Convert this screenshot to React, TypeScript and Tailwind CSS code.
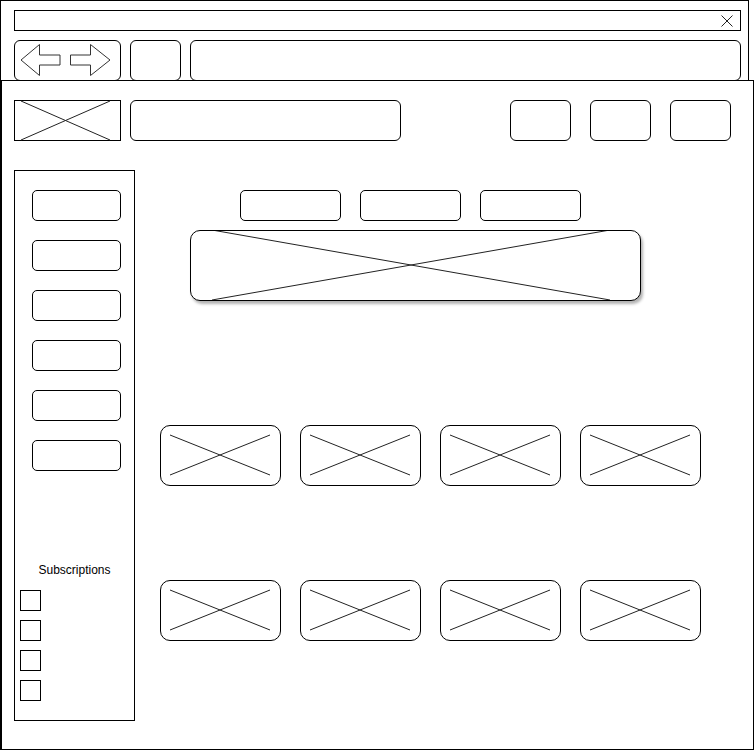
import React from "react";

function XLines({ w, h, x1, y1, x2, y2 }: { w: number; h: number; x1: number; y1: number; x2: number; y2: number }) {
  return (
    <svg width={w} height={h} className="block overflow-visible">
      <line x1={x1} y1={y1} x2={x2} y2={y2} stroke="#222" strokeWidth={1} />
      <line x1={x1} y1={y2} x2={x2} y2={y1} stroke="#222" strokeWidth={1} />
    </svg>
  );
}

function Card() {
  return (
    <div className="w-[121px] h-[61px] border border-black rounded-[10px] overflow-hidden bg-white">
      <XLines w={119} h={59} x1={9} y1={9} x2={109} y2={49} />
    </div>
  );
}

export default function App() {
  const sideButtons = [0, 1, 2, 3, 4, 5];
  const checks = [0, 1, 2, 3];
  const tabs = [0, 1, 2];
  const headerBtns = [0, 1, 2];
  return (
    <div className="w-[755px] h-[751px] bg-white overflow-hidden" style={{ fontFamily: '"Liberation Sans", Arial, sans-serif' }}>
      {/* browser frame */}
      <div className="w-[749px] h-[750px] border border-black flex flex-col">
        <div className="pl-[13px] pt-[9px]">
          {/* title bar */}
          <div className="w-[727px] h-[21px] border border-black flex items-center justify-end pr-[7px]">
            <svg width="12" height="12" className="block">
              <line x1="0.5" y1="0.5" x2="11.5" y2="11.5" stroke="#222" strokeWidth="1" />
              <line x1="0.5" y1="11.5" x2="11.5" y2="0.5" stroke="#222" strokeWidth="1" />
            </svg>
          </div>
          {/* nav row */}
          <div className="flex mt-[9px] gap-[9px]">
            <div className="w-[107px] h-[41px] border border-black rounded-[6px]">
              <svg width="105" height="39" className="block overflow-visible">
                <g transform="translate(-15,-41)">
                  <polygon
                    points="21,60 39.5,44.5 39.5,55 60,55 60,65 39.5,65 39.5,75.5"
                    fill="white"
                    stroke="#333"
                    strokeWidth="1"
                  />
                  <polygon
                    points="110,60 90.5,44.5 90.5,55 70.5,55 70.5,65 90.5,65 90.5,75.5"
                    fill="white"
                    stroke="#333"
                    strokeWidth="1"
                  />
                </g>
              </svg>
            </div>
            <div className="w-[51px] h-[41px] border border-black rounded-[6px]" />
            <div className="w-[551px] h-[41px] border border-black rounded-[6px]" />
          </div>
        </div>
        {/* page frame */}
        <div className="relative z-10 mt-[-1px] w-[753px] h-[670px] shrink-0 border border-black bg-white flex flex-col">
          {/* header */}
          <div className="flex items-start mt-[19px] pl-[12px]">
            <div className="w-[107px] h-[41px] border border-black">
              <XLines w={105} h={39} x1={6} y1={0} x2={95} y2={39} />
            </div>
            <div className="ml-[9px] w-[271px] h-[41px] border border-black rounded-[6px]" />
            <div className="ml-[109px] flex gap-[19px]">
              {headerBtns.map((i) => (
                <div key={i} className="w-[61px] h-[41px] border border-black rounded-[6px]" />
              ))}
            </div>
          </div>
          {/* body */}
          <div className="flex mt-[29px] pl-[12px]">
            {/* sidebar */}
            <div className="w-[121px] h-[551px] border border-black flex flex-col">
              <div className="pl-[17px] pt-[19px] flex flex-col gap-[19px]">
                {sideButtons.map((i) => (
                  <div key={i} className="w-[89px] h-[31px] border border-black rounded-[5px]" />
                ))}
              </div>
              <div className="mt-[92px] w-full text-center text-[12px] leading-[14px] text-black">Subscriptions</div>
              <div className="pl-[5px] mt-[13px] flex flex-col gap-[9px]">
                {checks.map((i) => (
                  <div key={i} className="w-[21px] h-[21px] border border-black" />
                ))}
              </div>
            </div>
            {/* main */}
            <div className="flex flex-col">
              <div className="ml-[105px] mt-[20px] flex gap-[19px]">
                {tabs.map((i) => (
                  <div key={i} className="w-[101px] h-[31px] border border-black rounded-[5px]" />
                ))}
              </div>
              <div className="ml-[55px] mt-[9px] w-[451px] h-[71px] border border-black rounded-[10px] bg-white overflow-hidden shadow-[2px_3px_3px_rgba(0,0,0,0.3)]">
                <XLines w={449} h={69} x1={21} y1={-1} x2={419} y2={69} />
              </div>
              <div className="ml-[25px] mt-[124px] flex gap-[19px]">
                {[0, 1, 2, 3].map((i) => (
                  <Card key={i} />
                ))}
              </div>
              <div className="ml-[25px] mt-[94px] flex gap-[19px]">
                {[0, 1, 2, 3].map((i) => (
                  <Card key={i} />
                ))}
              </div>
            </div>
          </div>
        </div>
      </div>
    </div>
  );
}
